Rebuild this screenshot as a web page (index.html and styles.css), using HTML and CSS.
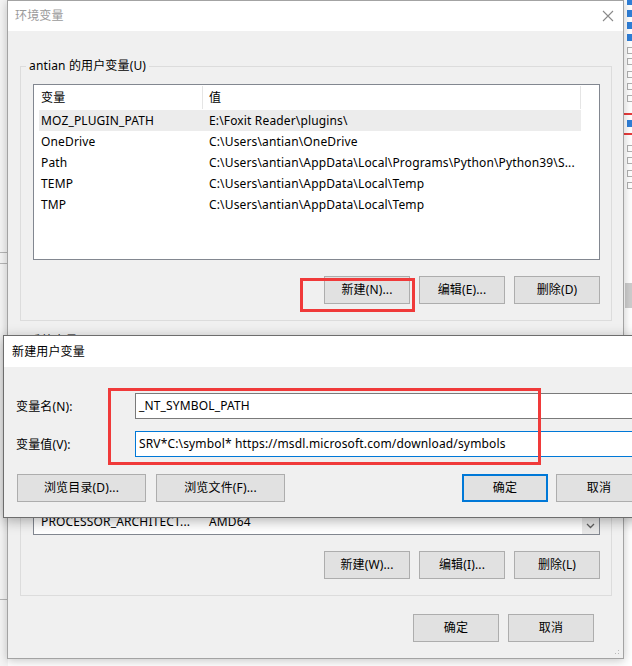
FILE: index.html
```html
<!DOCTYPE html>
<html lang="zh-CN">
<head>
<meta charset="utf-8">
<title>环境变量</title>
<link rel="stylesheet" href="styles.css">
</head>
<body>
<div class="desktop">
  <div class="bg-left">
    <span class="bg-line l1"></span>
    <span class="bg-line l2"></span>
    <span class="bg-line l3"></span>
  </div>
  <div class="bg-right">
    <span class="cb on" style="top:-2px"></span>
    <span class="cb on" style="top:10px"></span>
    <span class="cb on" style="top:22px"></span>
    <span class="cb on" style="top:34px"></span>
    <span class="cb" style="top:47px"></span>
    <span class="cb" style="top:58px"></span>
    <span class="cb" style="top:71px"></span>
    <span class="cb" style="top:83px"></span>
    <span class="cb" style="top:95px"></span>
    <span class="redline" style="top:113px"></span>
    <span class="cb on" style="top:120px"></span>
    <span class="redline" style="top:133px"></span>
    <span class="cb" style="top:145px"></span>
    <span class="cb" style="top:157px"></span>
    <span class="cb" style="top:170px"></span>
    <span class="cb" style="top:182px"></span>
    <span class="sbar"></span>
  </div>

  <div class="window main">
    <div class="titlebar">
      <span class="title inactive">环境变量</span>
      <svg class="close" width="12" height="12" viewBox="0 0 12 12"><path d="M1 1 L11 11 M11 1 L1 11" stroke="#8a8a8a" stroke-width="1.1" fill="none"/></svg>
    </div>
    <div class="win-body">
      <div class="group">
        <span class="group-label">antian 的用户变量(U)</span>
        <div class="list">
          <div class="list-main">
            <div class="list-head">
              <div class="c1 hd">变量</div>
              <div class="c2 hd">值</div>
            </div>
            <div class="row sel"><div class="c1">MOZ_PLUGIN_PATH</div><div class="c2">E:\Foxit Reader\plugins\</div></div>
            <div class="row"><div class="c1">OneDrive</div><div class="c2">C:\Users\antian\OneDrive</div></div>
            <div class="row"><div class="c1">Path</div><div class="c2">C:\Users\antian\AppData\Local\Programs\Python\Python39\S...</div></div>
            <div class="row"><div class="c1">TEMP</div><div class="c2">C:\Users\antian\AppData\Local\Temp</div></div>
            <div class="row"><div class="c1">TMP</div><div class="c2">C:\Users\antian\AppData\Local\Temp</div></div>
          </div>
        </div>
        <div class="btn-row">
          <button class="btn">新建(N)...</button>
          <button class="btn">编辑(E)...</button>
          <button class="btn">删除(D)</button>
        </div>
      </div>

      <div class="group group2">
        <span class="group-label">系统变量(S)</span>
        <div class="list">
          <div class="list-main">
            <div class="list-head"></div>
            <div class="row"></div>
            <div class="row"></div>
            <div class="row"></div>
            <div class="row"></div>
            <div class="row"></div>
            <div class="row"></div>
            <div class="row"><div class="c1">PROCESSOR_ARCHITECT...</div><div class="c2">AMD64</div></div>
          </div>
          <div class="vscroll">
            <div class="sb-btn">
              <svg width="9" height="6" viewBox="0 0 9 6"><path d="M1 1 L4.5 4.5 L8 1" stroke="#606060" stroke-width="1.3" fill="none"/></svg>
            </div>
          </div>
        </div>
        <div class="btn-row">
          <button class="btn">新建(W)...</button>
          <button class="btn">编辑(I)...</button>
          <button class="btn">删除(L)</button>
        </div>
      </div>

      <div class="btn-row footer">
        <button class="btn">确定</button>
        <button class="btn">取消</button>
      </div>
    </div>
    <span class="grip"></span>
  </div>

  <div class="window dialog">
    <div class="titlebar dtitle">
      <span class="title">新建用户变量</span>
    </div>
    <div class="dlg-body">
      <div class="field">
        <label class="field-label">变量名(N):</label>
        <div class="input">_NT_SYMBOL_PATH</div>
      </div>
      <div class="field">
        <label class="field-label">变量值(V):</label>
        <div class="input focus">SRV*C:\symbol* https://msdl.microsoft.com/download/symbols</div>
      </div>
      <div class="dlg-buttons">
        <div class="left-btns">
          <button class="btn wide">浏览目录(D)...</button>
          <button class="btn wide">浏览文件(F)...</button>
        </div>
        <div class="right-btns">
          <button class="btn default">确定</button>
          <button class="btn">取消</button>
        </div>
      </div>
    </div>
  </div>

  <div class="mark mark1"></div>
  <div class="mark mark2"></div>
</div>
</body>
</html>
```
FILE: styles.css
```css
* { box-sizing: border-box; }

html, body {
  margin: 0;
  padding: 0;
}

body {
  width: 632px;
  height: 666px;
  overflow: hidden;
  background: #ffffff;
  font-family: "Noto Sans", "Noto Sans CJK SC", sans-serif;
  font-size: 12px;
  letter-spacing: 0.15px;
  color: #000;
}

.desktop {
  position: relative;
  width: 632px;
  height: 666px;
  overflow: hidden;
  background: #ffffff;
}

/* background bits behind the windows */
.bg-left {
  position: absolute;
  left: 0;
  top: 0;
  width: 8px;
  height: 666px;
  background: #f4f4f4;
}
.bg-line {
  position: absolute;
  left: 0;
  width: 8px;
  height: 1px;
  background: #b5b5b5;
}
.l1 { top: 252px; }
.l2 { top: 263px; }
.l3 { top: 599px; }

.bg-right {
  position: absolute;
  left: 623px;
  top: 0;
  width: 9px;
  height: 666px;
  background: #ffffff;
}
.cb {
  position: absolute;
  left: 4px;
  width: 8px;
  height: 7px;
  border: 1px solid #b0b0b0;
  background: #fff;
}
.cb.on {
  background: #2f7fd8;
  border-color: #2f7fd8;
}
.redline {
  position: absolute;
  left: 0;
  width: 9px;
  height: 2px;
  background: #e83c3c;
}
.sbar {
  position: absolute;
  left: 2px;
  top: 283px;
  width: 7px;
  height: 25px;
  background: #cdcdcd;
}

/* windows */
.window {
  position: absolute;
  display: flex;
  flex-direction: column;
  background: #f0f0f0;
}

.main {
  left: 7px;
  top: 0;
  width: 617px;
  height: 659px;
  border: 1px solid #a3a3a3;
  box-shadow: 0 2px 9px rgba(0, 0, 0, 0.22);
}

.titlebar {
  height: 30px;
  flex: none;
  background: #ffffff;
  display: flex;
  align-items: center;
  justify-content: space-between;
  padding: 0 9px 0 7px;
}

.title {
  font-size: 12px;
  line-height: 16px;
}
.title.inactive { color: #9a9a9a; }

.close { display: block; }

.win-body {
  flex: 1;
  display: flex;
  flex-direction: column;
  padding: 35px 11px 0 12px;
}

.group {
  position: relative;
  border: 1px solid #dcdcdc;
  padding: 17px 11px 16px 12px;
}
.group2 { margin-top: 20px; }

.group-label {
  position: absolute;
  left: 5px;
  top: -9px;
  padding: 0 3px;
  line-height: 16px;
  background: #f0f0f0;
  white-space: nowrap;
}

.list {
  height: 176px;
  border: 1px solid #828790;
  background: #ffffff;
  display: flex;
  overflow: hidden;
}
.list-main {
  flex: 1;
  padding-left: 5px;
}

.list-head {
  display: flex;
  height: 25px;
  align-items: stretch;
}
.hd {
  border-right: 1px solid #e5e5e5;
  margin: 1px 0;
  line-height: 23px;
}

.c1 {
  width: 164px;
  flex: none;
  padding-left: 2px;
  white-space: nowrap;
  overflow: hidden;
}
.c2 {
  width: 378px;
  flex: none;
  padding-left: 6px;
  white-space: nowrap;
  overflow: hidden;
}

.row {
  display: flex;
  height: 21px;
  line-height: 21px;
  width: 542px;
}
.row.sel { background: #ececec; }

.vscroll {
  width: 17px;
  flex: none;
  background: #f0f0f0;
  display: flex;
  flex-direction: column;
  justify-content: flex-end;
}
.sb-btn {
  height: 16px;
  display: flex;
  align-items: center;
  justify-content: center;
  background: #e8e8e8;
}
.sb-btn svg { display: block; }

.btn-row {
  display: flex;
  justify-content: flex-end;
  gap: 9px;
  margin-top: 16px;
}
.footer {
  margin-top: 18px;
  padding-right: 18px;
}

.btn {
  width: 86px;
  height: 28px;
  padding: 0;
  margin: 0;
  background: #e1e1e1;
  border: 1px solid #adadad;
  font-family: "Noto Sans", "Noto Sans CJK SC", sans-serif;
  font-size: 12px;
  letter-spacing: 0.15px;
  color: #000;
  line-height: 26px;
  text-align: center;
}

.grip {
  position: absolute;
  right: 2px;
  bottom: 2px;
  width: 10px;
  height: 10px;
  background-image: radial-gradient(circle, #b8b8b8 0.9px, transparent 1px);
  background-size: 3px 3px;
  clip-path: polygon(100% 0, 100% 100%, 0 100%);
}

/* new variable dialog */
.dialog {
  left: 3px;
  top: 335px;
  width: 680px;
  height: 183px;
  border: 1px solid #6d6d6d;
  box-shadow: 0 3px 12px rgba(0, 0, 0, 0.3);
}
.dtitle {
  height: 31px;
  padding-left: 8px;
}
.dtitle .title { color: #000; padding-top: 1px; }

.dlg-body {
  flex: 1;
  display: flex;
  flex-direction: column;
  padding: 26px 16px 15px 12px;
}

.field {
  display: flex;
  align-items: center;
  height: 26px;
}
.field + .field { margin-top: 12px; }

.field-label {
  width: 119px;
  flex: none;
}

.input {
  flex: 1;
  height: 26px;
  border: 1px solid #7a7a7a;
  background: #fff;
  line-height: 24px;
  padding-left: 3px;
  white-space: nowrap;
}
.input.focus { border-color: #0078d7; }

.dlg-buttons {
  display: flex;
  justify-content: space-between;
  margin-top: 17px;
  padding-left: 1px;
  padding-right: 24px;
}
.left-btns, .right-btns {
  display: flex;
  gap: 10px;
}
.right-btns { gap: 8px; }
.btn.wide { width: 129px; }
.btn.default {
  border: 2px solid #0078d7;
  line-height: 24px;
}

/* red annotation boxes */
.mark {
  position: absolute;
  border: 3px solid #f03a3a;
  pointer-events: none;
}
.mark1 {
  left: 300px;
  top: 278px;
  width: 115px;
  height: 34px;
}
.mark2 {
  left: 108px;
  top: 388px;
  width: 433px;
  height: 77px;
}
```
